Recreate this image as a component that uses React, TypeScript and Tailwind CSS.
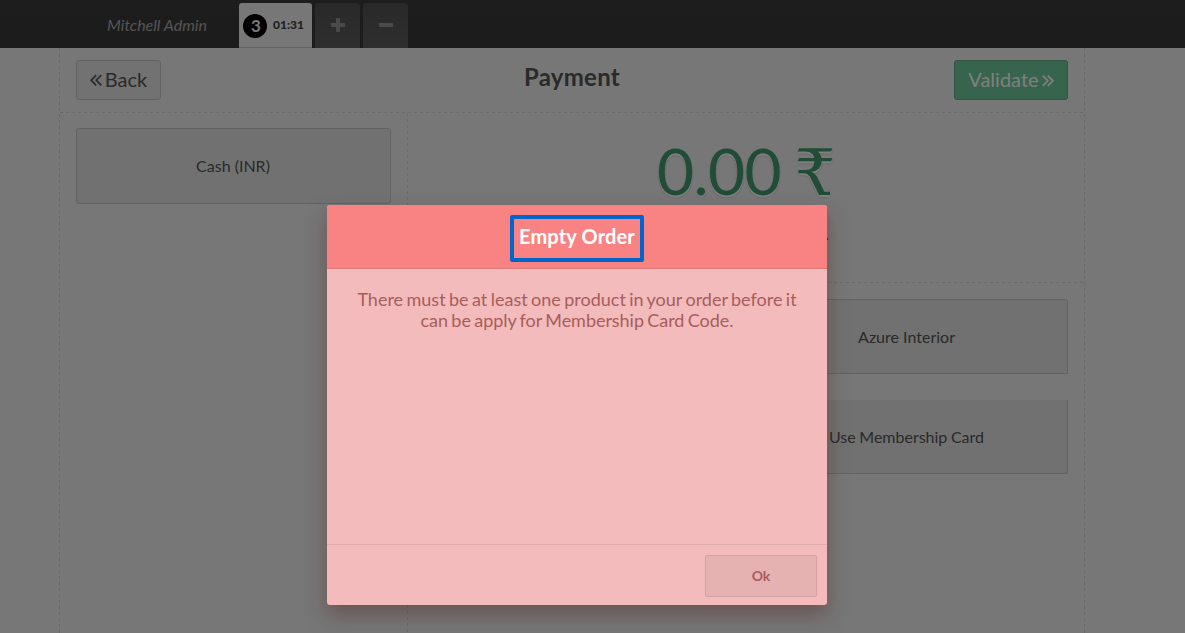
import type { ReactNode } from "react";

function HorizontalDash() {
  return (
    <div className="h-px shrink-0 bg-[repeating-linear-gradient(to_right,#d2d2d2_0px_3px,transparent_3px_6px)]" />
  );
}

function VerticalDash() {
  return (
    <div className="w-px shrink-0 bg-[repeating-linear-gradient(to_bottom,#d2d2d2_0px_3px,transparent_3px_6px)]" />
  );
}

function DoubleAngle({ flip = false }: { flip?: boolean }) {
  return (
    <svg
      width="12"
      height="13"
      viewBox="0 0 12 13"
      fill="none"
      stroke="currentColor"
      strokeWidth="1.7"
      className={flip ? "mt-0.5 rotate-180" : "mt-0.5"}
      aria-hidden="true"
    >
      <path d="M6.2 1.1 L1.2 6.2 L6.2 11.3 M11.2 1.1 L6.2 6.2 L11.2 11.3" />
    </svg>
  );
}

function OrderTab({ children }: { children: ReactNode }) {
  return (
    <button className="flex h-[45px] w-[45px] items-start justify-start rounded-t-[3px] bg-linear-to-b from-[#525252] to-[#5e5e5e] pt-[15px] pl-4 text-[#949494]">
      {children}
    </button>
  );
}

function TopBar() {
  return (
    <header className="flex h-12 shrink-0 items-end bg-linear-to-b from-[#3a3a3a] to-[#383838]">
      <span className="w-[239px] pb-px pl-[107px] text-base leading-[45px] text-[#a8a8a8] italic">
        Mitchell Admin
      </span>
      <div className="flex gap-[3px]">
        <button className="flex h-[45px] w-[73px] items-center gap-1.5 rounded-t-[3px] border-b border-[#c9c9c9] bg-[#eeeeee] pl-1 text-[#444444]">
          <span className="mt-0.5 flex size-6 shrink-0 items-center justify-center rounded-full bg-black pl-0.5 text-[17px] leading-6 font-bold text-[#eeeeee]">
            3
          </span>
          <span className="text-xs font-black">01:31</span>
        </button>
        <OrderTab>
          <svg width="14" height="14" viewBox="0 0 14 14" fill="currentColor" aria-hidden="true">
            <rect x="0" y="5" width="14" height="4" rx="0.8" />
            <rect x="5" y="0" width="4" height="14" rx="0.8" />
          </svg>
        </OrderTab>
        <OrderTab>
          <svg width="14" height="14" viewBox="0 0 14 14" fill="currentColor" aria-hidden="true">
            <rect x="0" y="5" width="14" height="4" rx="0.8" />
          </svg>
        </OrderTab>
      </div>
    </header>
  );
}

function PaymentScreen() {
  return (
    <main className="ml-[59px] flex w-[1026px] flex-1">
      <VerticalDash />
      <div className="flex flex-1 flex-col">
        <div className="flex h-16 shrink-0 items-start justify-between px-4 pt-3">
          <button className="flex h-10 w-[85px] items-center justify-center gap-[3px] rounded-[3px] border border-[#c4c4c4] bg-[#e4e4e4] pb-0.5 text-xl">
            <DoubleAngle />
            Back
          </button>
          <h1 className="ml-[29px] text-2xl leading-[34px] font-bold tracking-[0.25px]">Payment</h1>
          <button className="flex h-10 w-[114px] items-center justify-center gap-[3px] rounded-[3px] border border-[#60a883] bg-[#6ec89b] pb-0.5 text-xl text-white">
            Validate
            <DoubleAngle flip />
          </button>
        </div>
        <HorizontalDash />
        <div className="flex flex-1">
          <section className="w-[347px] shrink-0 pt-[15px] pl-4">
            <button className="flex h-[76px] w-[315px] items-center justify-center rounded-[3px] border border-[#c4c4c4] bg-[#e2e2e2] pr-px text-base">
              Cash (INR)
            </button>
          </section>
          <VerticalDash />
          <section className="flex flex-1 flex-col">
            <div className="h-[169px] text-center">
              <p className="pt-[26px] text-[64px] leading-[64px] tracking-[-0.6px] text-[#43996e] [text-shadow:0px_2px_white,0px_2px_2px_rgba(0,0,0,0.27)]">
                0.00 <span className="-ml-0.5 font-['DejaVu_Serif',serif]">₹</span>
              </p>
              <p className="w-[421px] pt-[17px] text-right text-base">.</p>
            </div>
            <HorizontalDash />
            <div className="flex flex-col gap-[26px] px-4 pt-4">
              <button className="flex h-[75px] items-center justify-center rounded-tr-[3px] border border-[#c4c4c4] bg-[#e2e2e2] pl-[321px] text-base">
                <span className="w-full text-center">Azure Interior</span>
              </button>
              <button className="flex h-[74px] items-center justify-center rounded-br-[3px] border border-t-0 border-[#c4c4c4] bg-[#e2e2e2] pl-[321px] text-base">
                <span className="w-full text-center [word-spacing:-0.5px]">Use Membership Card</span>
              </button>
            </div>
          </section>
        </div>
      </div>
      <VerticalDash />
    </main>
  );
}

function EmptyOrderDialog() {
  return (
    <div className="absolute inset-0 bg-black/50 pt-[205px] pl-[327px]">
      <div
        role="dialog"
        className="flex h-[400px] w-[500px] flex-col rounded-[3px] bg-[#f3bbbb] text-center text-[#a85d5d] shadow-[0px_10px_20px_rgba(92,51,51,0.5)]"
      >
        <div className="flex h-16 justify-center rounded-t-[3px] border-b border-[#e27a7a] bg-[#f98383] pt-2.5">
          <h2 className="flex h-[47px] w-[134px] justify-center rounded-xs border-4 border-[#0066cc] text-xl leading-[35px] font-bold tracking-[0.15px] text-white">
            Empty Order
          </h2>
        </div>
        <p className="flex-1 px-6 pt-5 text-lg leading-[21px] [word-spacing:-1.2px]">
          There must be at least one product in your order before it
          <br />
          <span className="tracking-[-0.04px]">can be apply for Membership Card Code.</span>
        </p>
        <div className="flex h-[61px] justify-end border-t border-[#dfabab] px-2.5 pt-2.5">
          <button className="h-[42px] w-28 rounded-xs border border-[#d3a3a3] bg-[#e6b1b1] text-sm font-bold">
            Ok
          </button>
        </div>
      </div>
    </div>
  );
}

export default function App() {
  return (
    <div className="relative flex h-[633px] w-[1185px] flex-col overflow-hidden bg-[#eeeeee] font-['Lato','Noto_Sans',sans-serif] text-[#555555]">
      <TopBar />
      <PaymentScreen />
      <EmptyOrderDialog />
    </div>
  );
}
